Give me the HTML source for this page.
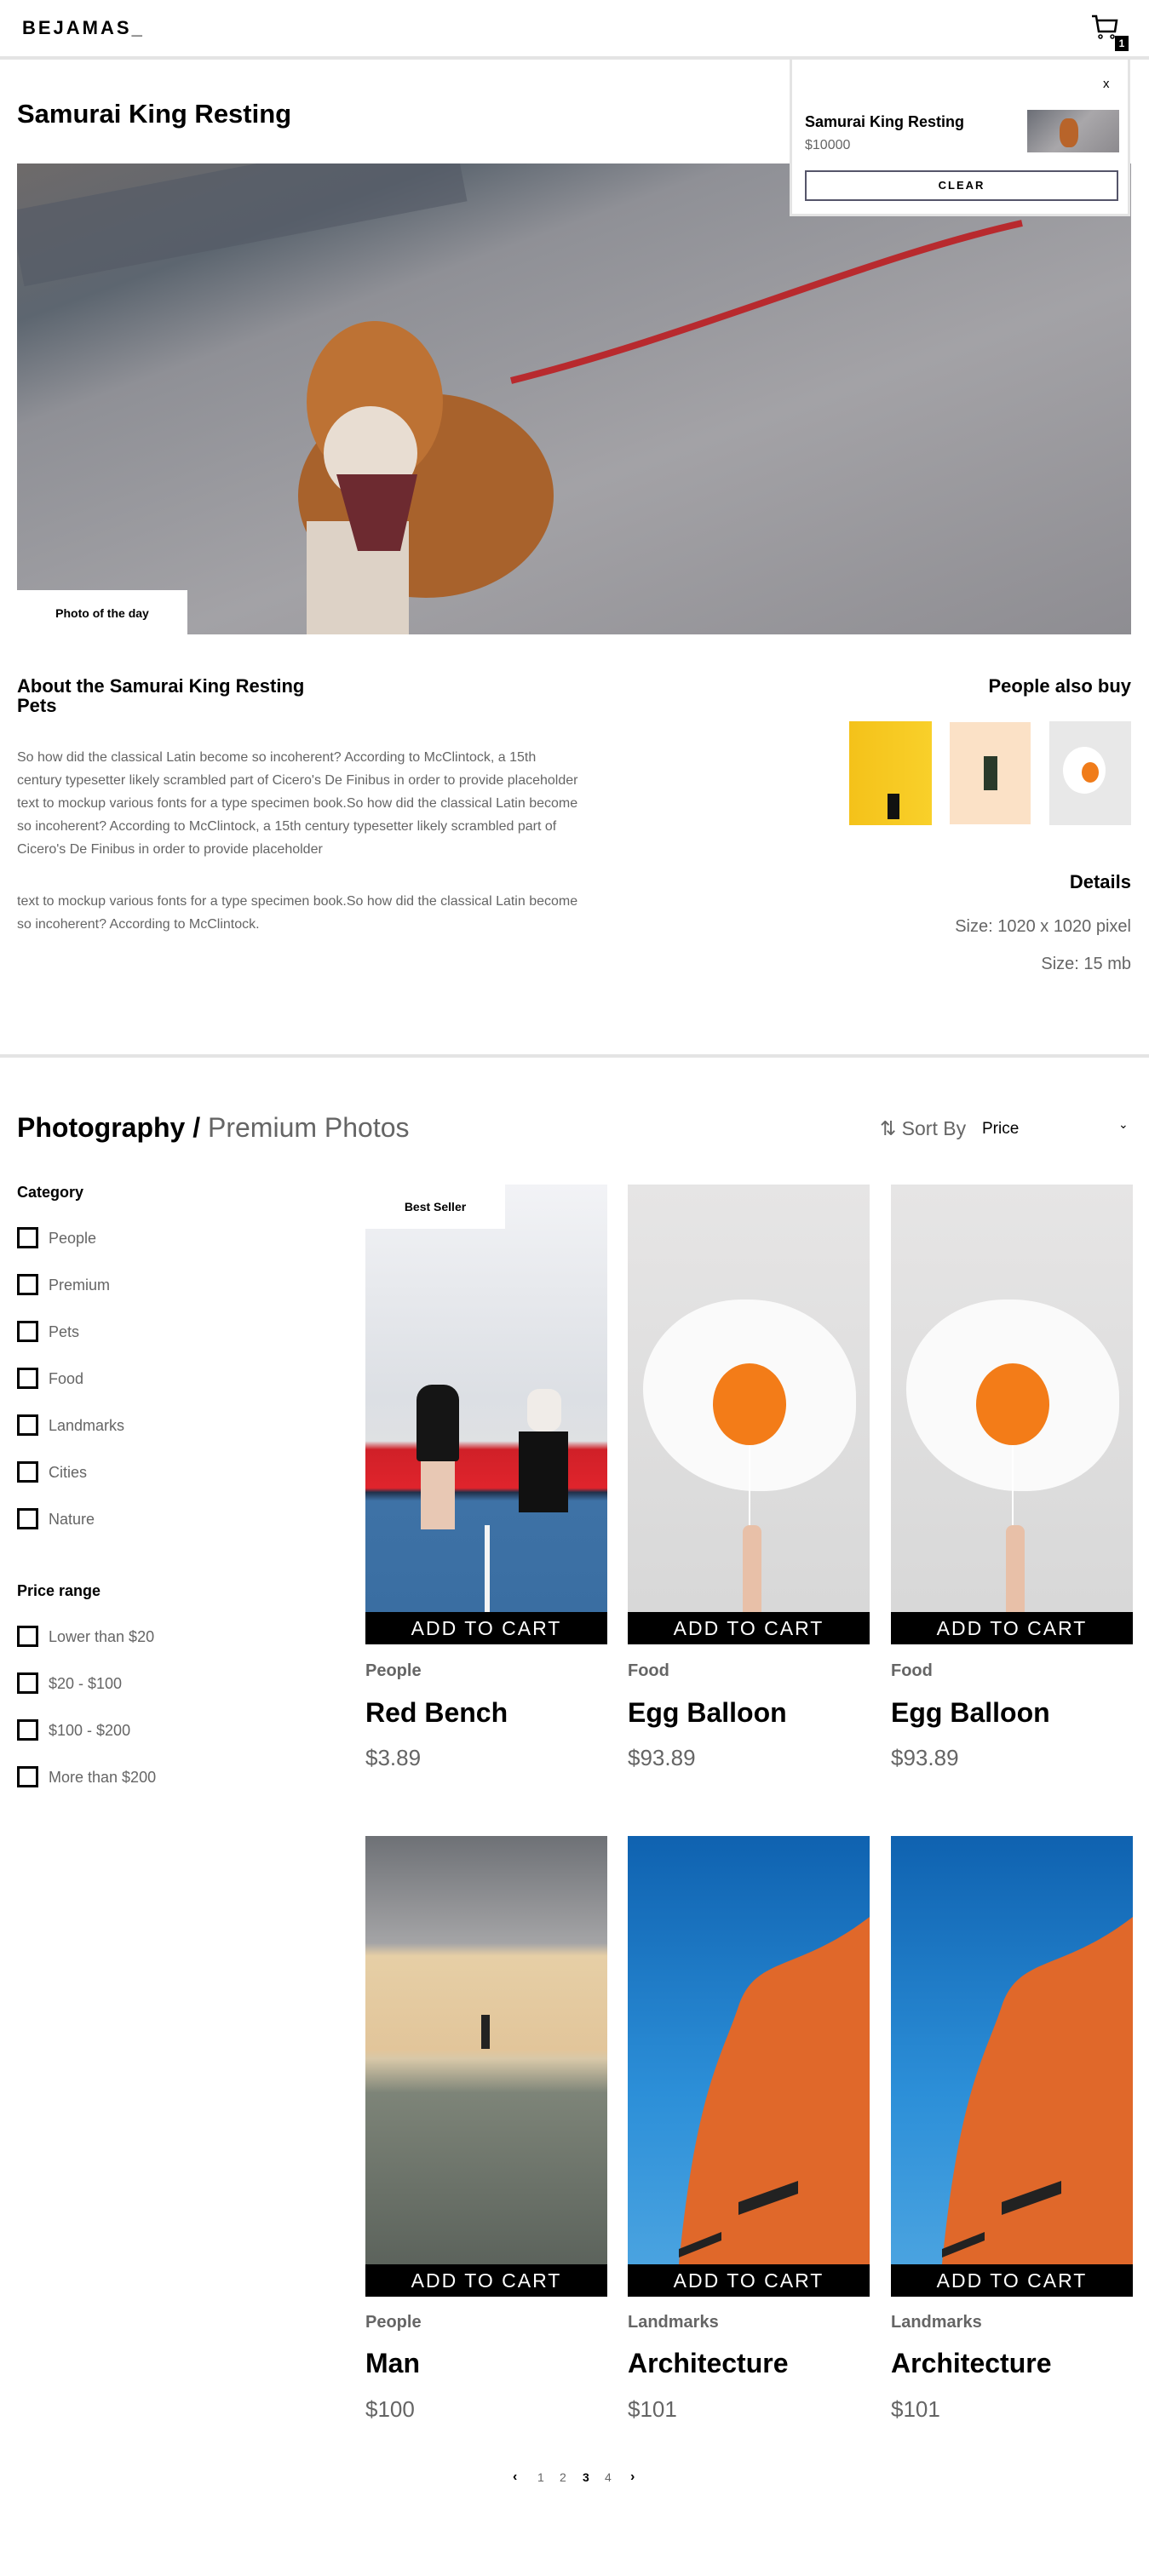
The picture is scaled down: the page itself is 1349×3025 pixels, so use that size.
<!DOCTYPE html>
<html><head><meta charset="utf-8">
<style>
*{margin:0;padding:0;box-sizing:border-box}
body{width:1349px;height:3025px;position:relative;background:#fff;font-family:"Liberation Sans",sans-serif;color:#000;overflow:hidden}
.a{position:absolute}
.g{color:#656565}
.cb{position:absolute;left:20px;width:25px;height:25px;border:3px solid #000}
.cl{position:absolute;left:57px;font-size:18px;color:#656565;line-height:20px}
.atc{position:absolute;height:38px;background:#000;color:#fff;font-size:23px;letter-spacing:2px;text-align:center;line-height:38px;width:284px}
.cat{position:absolute;font-size:20px;font-weight:bold;color:#656565}
.nm{position:absolute;font-size:32px;font-weight:bold}
.pr{position:absolute;font-size:26px;color:#656565}
</style></head><body>
<!-- header -->
<div class="a" style="left:26px;top:20px;font-size:22px;font-weight:bold;letter-spacing:3px">BEJAMAS_</div>
<svg class="a" style="left:1280px;top:16px" width="34" height="34" viewBox="0 0 34 34"><path d="M2 3h5l3 18h19l2-13H9" fill="none" stroke="#000" stroke-width="2.5"/><circle cx="12" cy="27" r="2" fill="none" stroke="#000" stroke-width="1.5"/><circle cx="26" cy="27" r="2" fill="none" stroke="#000" stroke-width="1.5"/></svg>
<div class="a" style="left:1309px;top:42px;width:16px;height:18px;background:#000;color:#fff;font-size:12px;font-weight:bold;text-align:center;line-height:18px">1</div>
<div class="a" style="left:0;top:66px;width:1349px;height:4px;background:#e4e4e4"></div>

<div class="a" style="left:20px;top:116px;font-size:31px;font-weight:bold">Samurai King Resting</div>

<!-- hero -->
<div class="a" style="left:20px;top:192px;width:1308px;height:553px;overflow:hidden;background:linear-gradient(160deg,#6e6a6a 0%,#5d6670 18%,#8f9096 30%,#a3a2a6 60%,#8e8d92 100%)">
 <svg width="1308" height="553" class="a" style="left:0;top:0">
  <path d="M0 100 L520 0" stroke="#545a66" stroke-width="90" opacity=".6"/>
  <path d="M580 255 C800 200 1000 110 1180 70" stroke="#b82a2e" stroke-width="8" fill="none"/>
  <ellipse cx="480" cy="390" rx="150" ry="120" fill="#a8622c"/>
  <ellipse cx="420" cy="280" rx="80" ry="95" fill="#bd7234"/>
  <ellipse cx="415" cy="340" rx="55" ry="55" fill="#e8ddd2"/>
  <rect x="340" y="420" width="120" height="133" fill="#ddd2c6"/>
  <path d="M375 365 L470 365 L450 455 L400 455Z" fill="#6d2a30"/>
 </svg>
 <div class="a" style="left:0;top:501px;width:200px;height:52px;background:#fff;font-size:14px;font-weight:bold;text-align:center;line-height:54px">Photo of the day</div>
</div>

<!-- cart dropdown -->
<div class="a" style="left:927px;top:70px;width:400px;height:184px;border:3px solid #e4e4e4;border-top:none;background:#fff;z-index:5">
 <div class="a" style="left:365px;top:20px;font-size:15px">x</div>
 <div class="a" style="left:15px;top:63px;font-size:18px;font-weight:bold">Samurai King Resting</div>
 <div class="a" style="left:15px;top:92px;font-size:16px;color:#656565">$10000</div>
 <div class="a" style="left:276px;top:59px;width:108px;height:50px;background:linear-gradient(135deg,#6b6e76,#a9a7aa 50%,#8c8a8e)"><div class="a" style="left:38px;top:10px;width:22px;height:34px;border-radius:40%;background:#b8642a"></div></div>
 <div class="a" style="left:15px;top:130px;width:368px;height:36px;border:2px solid #55556a;text-align:center;line-height:32px;font-size:13px;font-weight:bold;letter-spacing:2px">CLEAR</div>
</div>

<!-- about -->
<div class="a" style="left:20px;top:794px;font-size:22px;font-weight:bold;line-height:23px;width:360px">About the Samurai King Resting<br>Pets</div>
<div class="a g" style="left:20px;top:876px;width:660px;font-size:16px;line-height:27px">So how did the classical Latin become so incoherent? According to McClintock, a 15th century typesetter likely scrambled part of Cicero's De Finibus in order to provide placeholder text to mockup various fonts for a type specimen book.So how did the classical Latin become so incoherent? According to McClintock, a 15th century typesetter likely scrambled part of Cicero's De Finibus in order to provide placeholder</div>
<div class="a g" style="left:20px;top:1045px;width:660px;font-size:16px;line-height:27px">text to mockup various fonts for a type specimen book.So how did the classical Latin become so incoherent? According to McClintock.</div>
<div class="a" style="right:21px;top:793px;font-size:22px;font-weight:bold">People also buy</div>
<div class="a" style="left:997px;top:847px;width:97px;height:122px;background:linear-gradient(90deg,#f4c21a,#f9d02a)"><div class="a" style="left:45px;top:85px;width:14px;height:30px;background:#111"></div></div>
<div class="a" style="left:1115px;top:848px;width:95px;height:120px;background:#fbe1c6"><div class="a" style="left:40px;top:40px;width:16px;height:40px;background:#2a3a2a"></div></div>
<div class="a" style="left:1232px;top:847px;width:96px;height:122px;background:#e8e8e8"><div class="a" style="left:16px;top:30px;width:50px;height:55px;border-radius:50%;background:#fff"></div><div class="a" style="left:38px;top:48px;width:20px;height:24px;border-radius:50%;background:#f07c1a"></div></div>
<div class="a" style="right:21px;top:1023px;font-size:22px;font-weight:bold">Details</div>
<div class="a g" style="right:21px;top:1077px;font-size:20px">Size: 1020 x 1020 pixel</div>
<div class="a g" style="right:21px;top:1121px;font-size:20px">Size: 15 mb</div>
<div class="a" style="left:0;top:1238px;width:1349px;height:4px;background:#e4e4e4"></div>

<!-- listing header -->
<div class="a" style="left:20px;top:1306px;font-size:32px"><b>Photography</b> <span style="font-weight:bold">/</span> <span class="g">Premium Photos</span></div>
<div class="a g" style="left:1033px;top:1312px;font-size:23px">⇅ Sort By</div>
<div class="a" style="left:1153px;top:1315px;font-size:19px">Price</div>
<div class="a" style="left:1313px;top:1312px;font-size:14px">⌄</div>

<!-- filters -->
<div class="a" style="left:20px;top:1390px;font-size:18px;font-weight:bold">Category</div>
<div class="cb" style="top:1441px"></div><div class="cl" style="top:1444px">People</div>
<div class="cb" style="top:1496px"></div><div class="cl" style="top:1499px">Premium</div>
<div class="cb" style="top:1551px"></div><div class="cl" style="top:1554px">Pets</div>
<div class="cb" style="top:1606px"></div><div class="cl" style="top:1609px">Food</div>
<div class="cb" style="top:1661px"></div><div class="cl" style="top:1664px">Landmarks</div>
<div class="cb" style="top:1716px"></div><div class="cl" style="top:1719px">Cities</div>
<div class="cb" style="top:1771px"></div><div class="cl" style="top:1774px">Nature</div>
<div class="a" style="left:20px;top:1858px;font-size:18px;font-weight:bold">Price range</div>
<div class="cb" style="top:1909px"></div><div class="cl" style="top:1912px">Lower than $20</div>
<div class="cb" style="top:1964px"></div><div class="cl" style="top:1967px">$20 - $100</div>
<div class="cb" style="top:2019px"></div><div class="cl" style="top:2022px">$100 - $200</div>
<div class="cb" style="top:2074px"></div><div class="cl" style="top:2077px">More than $200</div>

<!-- row1 -->
<div class="a" style="left:429px;top:1391px;width:284px;height:502px;overflow:hidden;background:linear-gradient(180deg,#f2f3f6 0%,#dcdfe4 50%,#dfe1e3 60%,#d02028 62%,#e0242c 71%,#20304a 72%,#3e72a6 74%,#3a6ea2 100%)">
 <div class="a" style="left:60px;top:235px;width:50px;height:90px;background:#151515;border-radius:18px 18px 4px 4px"></div>
 <div class="a" style="left:65px;top:325px;width:40px;height:80px;background:#e8c8b4"></div>
 <div class="a" style="left:190px;top:240px;width:40px;height:50px;background:#f0ece8;border-radius:14px"></div>
 <div class="a" style="left:180px;top:290px;width:58px;height:95px;background:#111"></div>
 <div class="a" style="left:140px;top:400px;width:6px;height:102px;background:#f4f4f4"></div>
 <div class="a" style="left:0;top:0;width:164px;height:52px;background:#fff;font-size:14px;font-weight:bold;text-align:center;line-height:28px;padding-top:12px">Best Seller</div>
</div>
<div class="atc" style="left:429px;top:1893px">ADD TO CART</div>
<div class="cat" style="left:429px;top:1951px">People</div>
<div class="nm" style="left:429px;top:1993px">Red Bench</div>
<div class="pr" style="left:429px;top:2049px">$3.89</div>

<div class="a" style="left:737px;top:1391px;width:284px;height:502px;overflow:hidden;background:linear-gradient(180deg,#e6e5e5,#d8d8d8)">
 <div class="a" style="left:18px;top:135px;width:250px;height:225px;border-radius:48% 52% 45% 55%;background:#fafafa"></div>
 <div class="a" style="left:100px;top:210px;width:86px;height:96px;border-radius:50%;background:#f37c18"></div>
 <div class="a" style="left:142px;top:306px;width:2px;height:150px;background:#fff"></div>
 <div class="a" style="left:135px;top:400px;width:22px;height:102px;background:#e8c0a8;border-radius:8px 8px 0 0"></div>
</div>
<div class="atc" style="left:737px;top:1893px">ADD TO CART</div>
<div class="cat" style="left:737px;top:1951px">Food</div>
<div class="nm" style="left:737px;top:1993px">Egg Balloon</div>
<div class="pr" style="left:737px;top:2049px">$93.89</div>

<div class="a" style="left:1046px;top:1391px;width:284px;height:502px;overflow:hidden;background:linear-gradient(180deg,#e6e5e5,#d8d8d8)">
 <div class="a" style="left:18px;top:135px;width:250px;height:225px;border-radius:48% 52% 45% 55%;background:#fafafa"></div>
 <div class="a" style="left:100px;top:210px;width:86px;height:96px;border-radius:50%;background:#f37c18"></div>
 <div class="a" style="left:142px;top:306px;width:2px;height:150px;background:#fff"></div>
 <div class="a" style="left:135px;top:400px;width:22px;height:102px;background:#e8c0a8;border-radius:8px 8px 0 0"></div>
</div>
<div class="atc" style="left:1046px;top:1893px">ADD TO CART</div>
<div class="cat" style="left:1046px;top:1951px">Food</div>
<div class="nm" style="left:1046px;top:1993px">Egg Balloon</div>
<div class="pr" style="left:1046px;top:2049px">$93.89</div>

<!-- row2 -->
<div class="a" style="left:429px;top:2156px;width:284px;height:503px;overflow:hidden;background:linear-gradient(180deg,#6e7176 0%,#a4a4a6 25%,#e6cfa6 28%,#e2c59a 50%,#d8c8a8 52%,#7d8478 60%,#5c635c 100%)">
 <div class="a" style="left:136px;top:210px;width:10px;height:40px;background:#222"></div>
</div>
<div class="atc" style="left:429px;top:2659px">ADD TO CART</div>
<div class="cat" style="left:429px;top:2716px">People</div>
<div class="nm" style="left:429px;top:2757px">Man</div>
<div class="pr" style="left:429px;top:2814px">$100</div>

<div class="a" style="left:737px;top:2156px;width:284px;height:503px;overflow:hidden;background:linear-gradient(180deg,#0f62b0,#2c8fd8 60%,#4aa3e0)">
 <svg width="284" height="503" class="a" style="left:0;top:0"><path d="M284 95 C200 160 150 140 130 200 C110 260 80 300 60 503 L284 503Z" fill="#e0682a"/><path d="M130 430 L200 405 L200 420 L130 445Z" fill="#222"/><path d="M60 485 L110 465 L110 475 L60 495Z" fill="#222"/></svg>
</div>
<div class="atc" style="left:737px;top:2659px">ADD TO CART</div>
<div class="cat" style="left:737px;top:2716px">Landmarks</div>
<div class="nm" style="left:737px;top:2757px">Architecture</div>
<div class="pr" style="left:737px;top:2814px">$101</div>

<div class="a" style="left:1046px;top:2156px;width:284px;height:503px;overflow:hidden;background:linear-gradient(180deg,#0f62b0,#2c8fd8 60%,#4aa3e0)">
 <svg width="284" height="503" class="a" style="left:0;top:0"><path d="M284 95 C200 160 150 140 130 200 C110 260 80 300 60 503 L284 503Z" fill="#e0682a"/><path d="M130 430 L200 405 L200 420 L130 445Z" fill="#222"/><path d="M60 485 L110 465 L110 475 L60 495Z" fill="#222"/></svg>
</div>
<div class="atc" style="left:1046px;top:2659px">ADD TO CART</div>
<div class="cat" style="left:1046px;top:2716px">Landmarks</div>
<div class="nm" style="left:1046px;top:2757px">Architecture</div>
<div class="pr" style="left:1046px;top:2814px">$101</div>

<!-- pagination -->
<div class="a" style="left:602px;top:2900px;font-size:16px;font-weight:bold">‹</div>
<div class="a g" style="left:631px;top:2901px;font-size:14px">1</div>
<div class="a g" style="left:657px;top:2901px;font-size:14px">2</div>
<div class="a" style="left:684px;top:2901px;font-size:14px;font-weight:bold">3</div>
<div class="a g" style="left:710px;top:2901px;font-size:14px">4</div>
<div class="a" style="left:740px;top:2900px;font-size:16px;font-weight:bold">›</div>
</body></html>
